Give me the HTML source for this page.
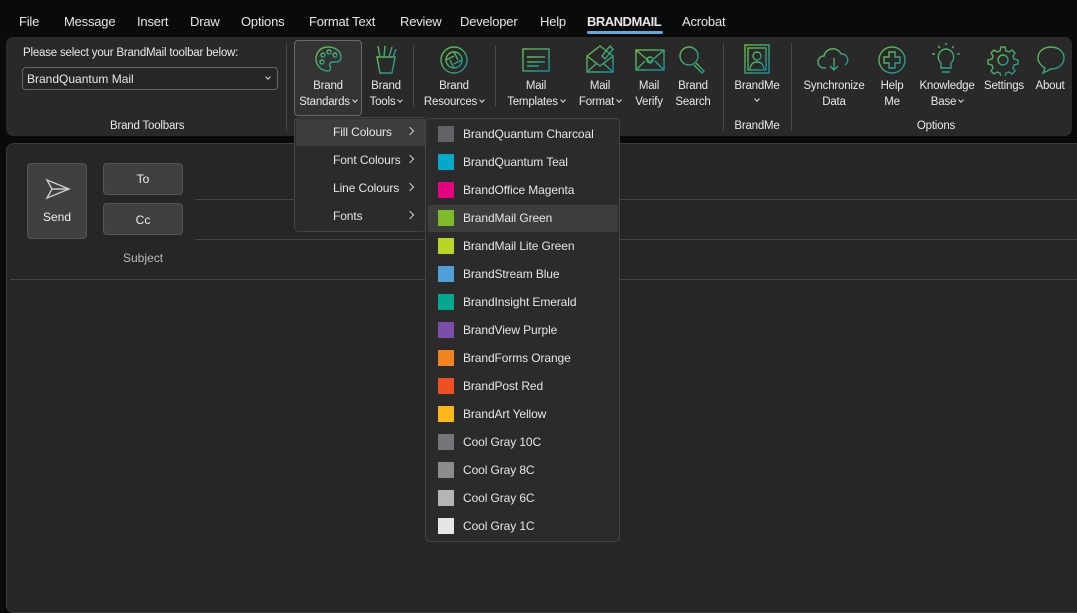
<!DOCTYPE html>
<html><head><style>
*{box-sizing:border-box;margin:0;padding:0}
body{width:1077px;height:600px;background:#0a0a0a;font-family:"Liberation Sans",sans-serif;color:#e8e8e8;position:relative;overflow:hidden;font-size:12px}
.tab{position:absolute;top:14px;font-size:13px;color:#e6e6e6;letter-spacing:-0.2px}
.ribbon{position:absolute;left:6px;top:37px;width:1066px;height:99px;background:#292929;border-radius:7px}
.a{position:absolute}
.lbl{position:absolute;font-size:11.5px;text-align:center;line-height:16px;color:#e8e8e8;white-space:nowrap;letter-spacing:-0.2px}
.sep{position:absolute;width:1px;background:#4a4a4a}
.compose{position:absolute;left:6px;top:143px;width:1080px;height:470px;background:#262626;border:1px solid #3c3c3c;border-radius:8px}
.btn{position:absolute;background:#404040;border:1px solid #555;border-radius:4px;text-align:center;font-size:12px;color:#eee}
.menu{position:absolute;background:#2b2b2b;border:1px solid #444;border-radius:5px}
.mi{position:absolute;font-size:12px;color:#e6e6e6;letter-spacing:-0.1px}
.sw{position:absolute;left:12px;width:16px;height:16px}
svg{position:absolute;fill:none;stroke-width:1.4}
.cv{display:inline-block;width:4px;height:4px;border-right:1px solid #ddd;border-bottom:1px solid #ddd;transform:rotate(45deg);margin:0 0 3px 3px}
.ar{position:absolute;width:6px;height:6px;border-right:1px solid #ccc;border-top:1px solid #ccc;transform:rotate(45deg)}
</style></head><body>
<svg width="0" height="0"><defs><linearGradient id="g" x1="0" y1="0" x2="1" y2="1"><stop offset="0" stop-color="#6cbf4a"/><stop offset="1" stop-color="#1a8f9a"/></linearGradient></defs></svg>
<div class="tab" style="left:19px">File</div>
<div class="tab" style="left:64px">Message</div>
<div class="tab" style="left:137px">Insert</div>
<div class="tab" style="left:190px">Draw</div>
<div class="tab" style="left:241px">Options</div>
<div class="tab" style="left:309px">Format Text</div>
<div class="tab" style="left:400px">Review</div>
<div class="tab" style="left:460px">Developer</div>
<div class="tab" style="left:540px">Help</div>
<div class="tab" style="left:587px;font-weight:bold;letter-spacing:-0.5px">BRANDMAIL</div>
<div class="a" style="left:587px;top:31px;width:76px;height:3px;background:#60a8e0;border-radius:2px"></div>
<div class="tab" style="left:682px">Acrobat</div>

<div class="ribbon"></div>
<div class="lbl" style="left:23px;top:45px">Please select your BrandMail toolbar below:</div>
<div class="a" style="left:22px;top:67px;width:256px;height:23px;border:1px solid #666;border-radius:4px;background:#262626;font-size:12px;padding:4px 0 0 4px">BrandQuantum Mail<span class="cv" style="position:absolute;right:7px;top:7px"></span></div>
<div class="lbl" style="left:110px;top:118px">Brand Toolbars</div>
<div class="sep" style="left:286px;top:43px;height:88px"></div>

<div class="a" style="left:294px;top:40px;width:68px;height:76px;border:1px solid #6a6a6a;border-radius:4px;background:#333"></div>
<svg style="left:313px;top:44px" width="30" height="30" stroke="url(#g)"><path d="M15 3C7 3 3 9 3 15s5 12 12 12c3 0 3-3 2-5s0-4 3-4h3c3 0 5-2 5-5 0-6-6-10-13-10z"/><circle cx="10" cy="11" r="2"/><circle cx="16" cy="8" r="2"/><circle cx="22" cy="11" r="2"/><circle cx="9" cy="18" r="2"/></svg>
<div class="lbl" style="left:296px;top:78px;width:64px">Brand<br>Standards<span class="cv"></span></div>
<svg style="left:371px;top:43px" width="30" height="32" stroke="url(#g)"><path d="M6 14h18l-3 16H9z"/><path d="M9 14L7 3M13 14l1-11M18 14l3-10M22 14l3-8"/></svg>
<div class="lbl" style="left:364px;top:78px;width:44px">Brand<br>Tools<span class="cv"></span></div>
<div class="sep" style="left:413px;top:46px;height:60px"></div>
<svg style="left:438px;top:44px" width="32" height="32" stroke="url(#g)"><circle cx="16" cy="16" r="13"/><circle cx="16" cy="16" r="8"/><path d="M16 8l4 8M24 16l-8 4M16 24l-4-8M8 16l8-4"/></svg>
<div class="lbl" style="left:418px;top:78px;width:72px">Brand<br>Resources<span class="cv"></span></div>
<div class="sep" style="left:495px;top:46px;height:60px"></div>
<svg style="left:520px;top:44px" width="32" height="32" stroke="url(#g)"><rect x="3" y="5" width="26" height="22"/><path d="M7 13h18M7 18h18M7 22h12"/></svg>
<div class="lbl" style="left:500px;top:78px;width:72px">Mail<br>Templates<span class="cv"></span></div>
<svg style="left:584px;top:42px" width="32" height="34" stroke="url(#g)"><path d="M3 14v16h26V14l-13-10z"/><path d="M3 30l10-9M29 30l-10-9M3 14l13 10 13-10"/><path d="M18 14l8-10 3 3-8 10z"/></svg>
<div class="lbl" style="left:572px;top:78px;width:56px">Mail<br>Format<span class="cv"></span></div>
<svg style="left:634px;top:48px" width="32" height="26" stroke="url(#g)"><rect x="2" y="2" width="28" height="20"/><path d="M2 2l14 12L30 2M2 22l9-9M30 22l-9-9"/><circle cx="16" cy="12" r="3"/></svg>
<div class="lbl" style="left:630px;top:78px;width:38px">Mail<br>Verify</div>
<svg style="left:677px;top:44px" width="32" height="32" stroke="url(#g)"><circle cx="12" cy="12" r="9"/><path d="M19 19l8 8-2 2-8-8"/></svg>
<div class="lbl" style="left:672px;top:78px;width:42px">Brand<br>Search</div>
<div class="sep" style="left:723px;top:43px;height:88px"></div>
<svg style="left:742px;top:43px" width="30" height="32" stroke="url(#g)"><rect x="3" y="2" width="24" height="28"/><rect x="6" y="5" width="18" height="22"/><circle cx="15" cy="13" r="4"/><path d="M8 26c1-6 4-7 7-7s6 1 7 7"/></svg>
<div class="lbl" style="left:728px;top:78px;width:58px">BrandMe<br><span class="cv" style="margin:0 0 4px 0"></span></div>
<div class="lbl" style="left:728px;top:118px;width:58px">BrandMe</div>
<div class="sep" style="left:791px;top:43px;height:88px"></div>
<svg style="left:817px;top:44px" width="34" height="32" stroke="url(#g)"><path d="M9 24H7a6 6 0 010-12 9 9 0 0117-2 6 6 0 014 11"/><path d="M17 14v12M13 22l4 4 4-4"/></svg>
<div class="lbl" style="left:798px;top:78px;width:72px">Synchronize<br>Data</div>
<svg style="left:876px;top:44px" width="32" height="32" stroke="url(#g)"><circle cx="16" cy="16" r="13"/><path d="M13 8h6v5h5v6h-5v5h-6v-5H8v-6h5z"/></svg>
<div class="lbl" style="left:874px;top:78px;width:36px">Help<br>Me</div>
<svg style="left:930px;top:42px" width="32" height="34" stroke="url(#g)"><path d="M16 7a8 8 0 00-5 14v5h10v-5a8 8 0 00-5-14zM12 30h8M5 12h-3M30 12h-3M8 4l2 2M24 4l-2 2M16 1v2"/></svg>
<div class="lbl" style="left:914px;top:78px;width:66px">Knowledge<br>Base<span class="cv"></span></div>
<svg style="left:987px;top:44px" width="32" height="32" stroke="url(#g)"><circle cx="16" cy="16" r="5"/><path d="M14 3h4l1 4 3 1 3-2 3 3-2 3 1 3 4 1v4l-4 1-1 3 2 3-3 3-3-2-3 1-1 4h-4l-1-4-3-1-3 2-3-3 2-3-1-3-4-1v-4l4-1 1-3-2-3 3-3 3 2 3-1z"/></svg>
<div class="lbl" style="left:980px;top:78px;width:48px">Settings</div>
<svg style="left:1035px;top:44px" width="32" height="32" stroke="url(#g)"><path d="M16 3c8 0 13 5 13 11s-5 11-13 11l-8 4 2-5c-4-2-7-6-7-10C3 8 8 3 16 3z"/><path d="M16 8v8M16 19v2"/></svg>
<div class="lbl" style="left:1030px;top:78px;width:40px">About</div>
<div class="lbl" style="left:900px;top:118px;width:72px">Options</div>

<div class="compose"></div>
<div class="btn" style="left:27px;top:163px;width:60px;height:76px"><svg style="left:16px;top:14px" width="28" height="22" stroke="#ccc" stroke-width="1.2"><path d="M3 2l22 9-22 9 5-9z"/><path d="M8 11h17"/></svg><div style="position:absolute;top:46px;width:100%">Send</div></div>
<div class="btn" style="left:103px;top:163px;width:80px;height:32px;padding-top:8px">To</div>
<div class="btn" style="left:103px;top:203px;width:80px;height:32px;padding-top:9px">Cc</div>
<div class="a" style="left:195px;top:199px;width:882px;height:1px;background:#444"></div>
<div class="a" style="left:195px;top:239px;width:882px;height:1px;background:#444"></div>
<div class="a" style="left:123px;top:251px;font-size:12px;color:#bbb">Subject</div>
<div class="a" style="left:10px;top:279px;width:1067px;height:1px;background:#444"></div>

<div class="menu" style="left:294px;top:117px;width:132px;height:115px">
<div class="a" style="left:1px;top:1px;width:129px;height:27px;background:#3d3d3d"></div>
<div class="mi" style="left:38px;top:7px">Fill Colours</div><div class="ar" style="left:112px;top:10px"></div>
<div class="mi" style="left:38px;top:35px">Font Colours</div><div class="ar" style="left:112px;top:38px"></div>
<div class="mi" style="left:38px;top:63px">Line Colours</div><div class="ar" style="left:112px;top:66px"></div>
<div class="mi" style="left:38px;top:91px">Fonts</div><div class="ar" style="left:112px;top:94px"></div>
</div>
<div class="menu" style="left:425px;top:118px;width:195px;height:424px">
<div class="a" style="left:2px;top:86px;width:190px;height:27px;background:#3d3d3d"></div>
<div class="sw" style="top:7px;background:#616366"></div><div class="mi" style="left:37px;top:8px">BrandQuantum Charcoal</div>
<div class="sw" style="top:35px;background:#00a9c9"></div><div class="mi" style="left:37px;top:36px">BrandQuantum Teal</div>
<div class="sw" style="top:63px;background:#e4007f"></div><div class="mi" style="left:37px;top:64px">BrandOffice Magenta</div>
<div class="sw" style="top:91px;background:#7dbb2a"></div><div class="mi" style="left:37px;top:92px">BrandMail Green</div>
<div class="sw" style="top:119px;background:#b8d628"></div><div class="mi" style="left:37px;top:120px">BrandMail Lite Green</div>
<div class="sw" style="top:147px;background:#4fa0d8"></div><div class="mi" style="left:37px;top:148px">BrandStream Blue</div>
<div class="sw" style="top:175px;background:#00a88f"></div><div class="mi" style="left:37px;top:176px">BrandInsight Emerald</div>
<div class="sw" style="top:203px;background:#7b4ea8"></div><div class="mi" style="left:37px;top:204px">BrandView Purple</div>
<div class="sw" style="top:231px;background:#f58220"></div><div class="mi" style="left:37px;top:232px">BrandForms Orange</div>
<div class="sw" style="top:259px;background:#f04e23"></div><div class="mi" style="left:37px;top:260px">BrandPost Red</div>
<div class="sw" style="top:287px;background:#fbb817"></div><div class="mi" style="left:37px;top:288px">BrandArt Yellow</div>
<div class="sw" style="top:315px;background:#747578"></div><div class="mi" style="left:37px;top:316px">Cool Gray 10C</div>
<div class="sw" style="top:343px;background:#8c8c8c"></div><div class="mi" style="left:37px;top:344px">Cool Gray 8C</div>
<div class="sw" style="top:371px;background:#b5b5b7"></div><div class="mi" style="left:37px;top:372px">Cool Gray 6C</div>
<div class="sw" style="top:399px;background:#e6e6e6"></div><div class="mi" style="left:37px;top:400px">Cool Gray 1C</div>
</div>
</body></html>
